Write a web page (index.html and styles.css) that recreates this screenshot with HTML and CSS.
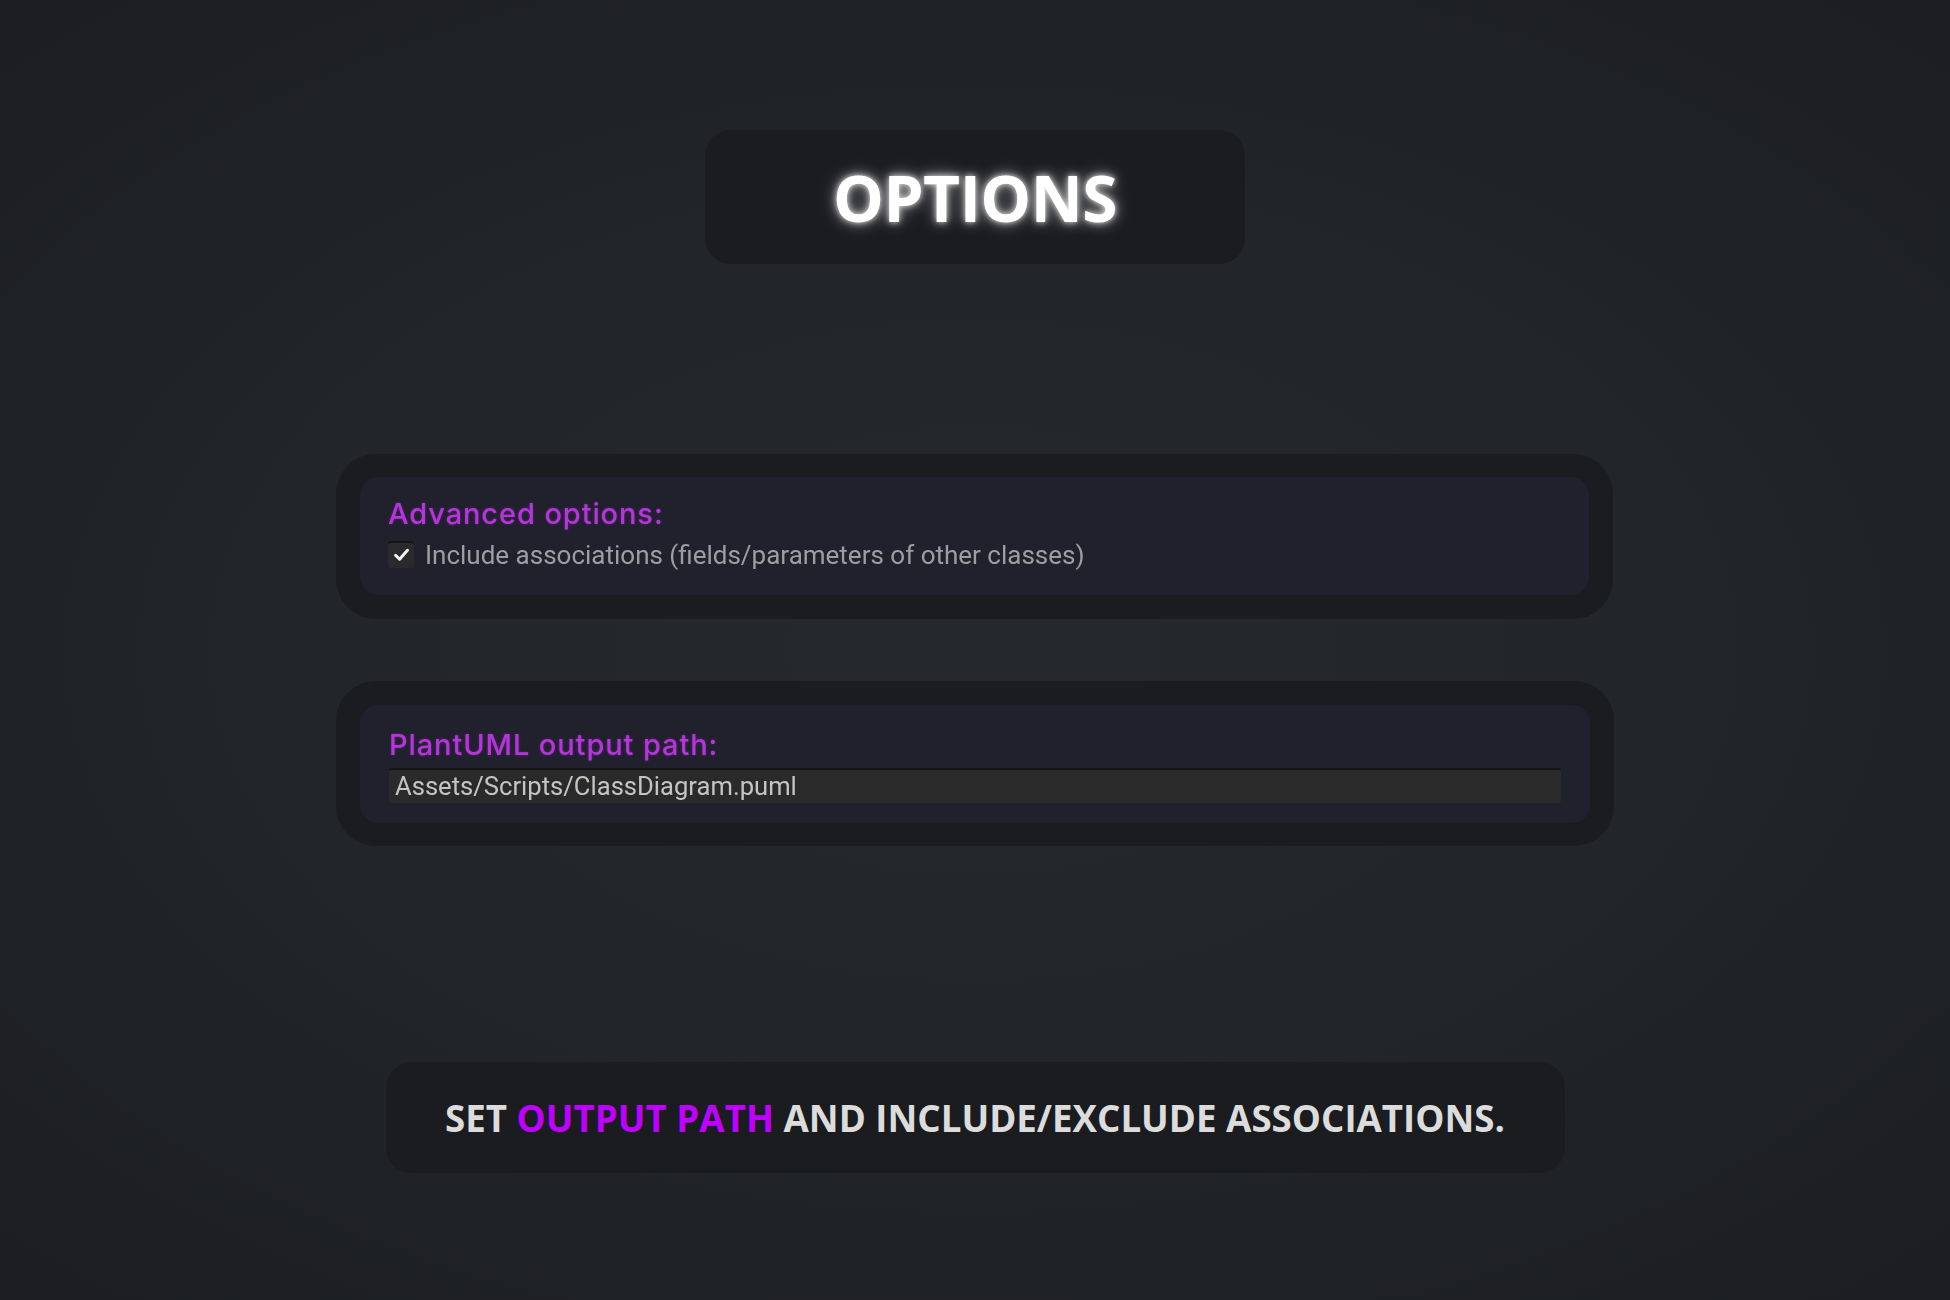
FILE: index.html
```html
<!DOCTYPE html>
<html lang="en">
<head>
<meta charset="utf-8">
<title>Options</title>
<link rel="stylesheet" href="styles.css">
</head>
<body>
<main class="page">
  <header class="title-box">
    <h1 class="title">OPTIONS</h1>
  </header>

  <section class="panel panel-first">
    <div class="panel-inner">
      <div class="label">Advanced options:</div>
      <label class="check-row">
        <span class="checkbox">
          <svg viewBox="0 0 16 16" width="19" height="19"><path d="M3 8.6 L6.4 12 L13 4.4" fill="none" stroke="#f4f4f4" stroke-width="2.5" stroke-linecap="round" stroke-linejoin="round"/></svg>
        </span>
        <span class="check-text">Include associations (fields/parameters of other classes)</span>
      </label>
    </div>
  </section>

  <section class="panel panel-second">
    <div class="panel-inner panel-inner-path">
      <div class="label">PlantUML output path:</div>
      <div class="input">Assets/Scripts/ClassDiagram.puml</div>
    </div>
  </section>

  <footer class="caption-box">
    <p class="caption">SET <span class="accent">OUTPUT PATH</span> AND INCLUDE/EXCLUDE ASSOCIATIONS.</p>
  </footer>
</main>
</body>
</html>
```

FILE: styles.css
```css
html, body {
  margin: 0;
  padding: 0;
}
body {
  width: 1950px;
  height: 1300px;
  overflow: hidden;
  background: radial-gradient(ellipse 70% 65% at 50% 50%, #25282d 0%, #222529 50%, #1c1e22 100%);
  font-family: "Open Sans", "Liberation Sans", sans-serif;
}
.page {
  display: flex;
  flex-direction: column;
  align-items: center;
  padding-top: 130px;
}
.title-box {
  width: 540px;
  height: 134px;
  box-sizing: border-box;
  background: #1b1c20;
  border-radius: 26px;
  display: flex;
  align-items: center;
  justify-content: center;
}
.title {
  margin: 0;
  font-family: "Open Sans", sans-serif;
  font-weight: 700;
  font-size: 64px;
  line-height: 1;
  color: #ffffff;
  letter-spacing: -0.5px;
  text-shadow: 0 0 6px rgba(255,255,255,0.85), 0 0 14px rgba(255,255,255,0.45), 0 0 24px rgba(255,255,255,0.2);
  padding-top: 2px;
}
.panel {
  background: #1b1c20;
  border-radius: 40px;
  box-sizing: border-box;
}
.panel-first {
  width: 1277px;
  margin-top: 190px;
  margin-left: -1px;
  padding: 23px 24px 24px 24px;
}
.panel-second {
  width: 1278px;
  margin-top: 62px;
  padding: 24px 24px 23px 24px;
}
.panel-inner {
  background: #20212d;
  border-radius: 18px;
  padding: 20px 28px 26px 28px;
  filter: blur(0.45px);
}
.label {
  font-family: Inter, "Noto Sans", sans-serif;
  font-weight: 500;
  font-size: 29px;
  line-height: 34px;
  letter-spacing: 0.9px;
  color: #b535da;
  text-shadow: 0 0 3px rgba(190, 50, 230, 0.35);
}
.check-row {
  display: flex;
  align-items: flex-start;
  gap: 11px;
  margin-top: 4px;
}
.checkbox {
  width: 26px;
  height: 27px;
  margin-top: 6px;
  background: #2a2a2c;
  border-radius: 3px;
  display: flex;
  align-items: center;
  justify-content: center;
  box-shadow: inset 0 2px 0 #151517;
}
.check-text {
  font-family: Roboto, "Liberation Sans", sans-serif;
  font-size: 26px;
  line-height: 27px;
  padding-top: 7px;
  color: #9e9ea0;
}
.panel-inner-path {
  padding: 23px 29px 20px 29px;
}
.input {
  margin-top: 6px;
  height: 35px;
  box-sizing: border-box;
  background: #2a2a2a;
  border-top: 2px solid #141416;
  border-radius: 3px;
  padding: 0 6px;
  font-family: Roboto, "Liberation Sans", sans-serif;
  font-size: 25.6px;
  line-height: 33px;
  color: #c4c4c4;
}
.caption-box {
  width: 1179px;
  height: 111px;
  margin-top: 216px;
  background: #1b1c20;
  border-radius: 26px;
  display: flex;
  align-items: center;
  justify-content: center;
}
.caption {
  margin: 0;
  font-family: "Open Sans", sans-serif;
  font-weight: 700;
  font-size: 36.7px;
  color: #dcdcdc;
}
.accent {
  color: #be00ff;
}
```
